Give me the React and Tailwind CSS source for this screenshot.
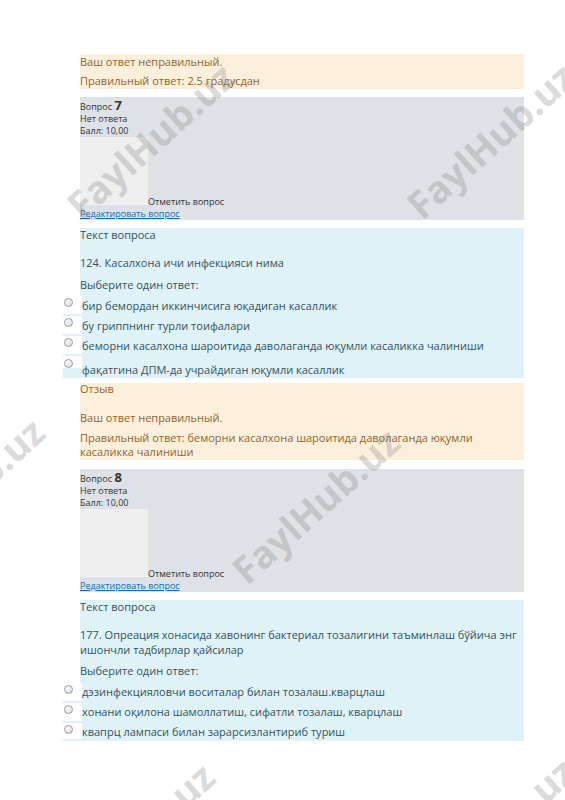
import React from 'react';

/* quiz review page: feedback, info and question blocks */

const Radio = () => (
  <span className="block w-[9px] h-[9px] rounded-full border border-[#9a9a9a] bg-linear-to-br from-white to-[#dcdcdc]" />
);

const Watermark = ({ className }) => (
  <span
    className={`absolute z-10 pointer-events-none select-none whitespace-nowrap text-[38px] font-bold leading-none text-[#808080]/30 -translate-x-1/2 -translate-y-1/2 -rotate-[42deg] ${className}`}
  >
    FaylHub.uz
  </span>
);

const InfoBox = ({ num, className = '' }) => (
  <div className={`bg-[#dee2e6] text-[9px] text-[#333] h-[123px] ${className}`}>
    <div className="h-[16px] pt-[2px] leading-[12px]">
      Вопрос <span className="text-[13px] font-bold leading-[12px]">{num}</span>
    </div>
    <div className="leading-[12px]">Нет ответа</div>
    <div className="leading-[12px]">Балл: 10,00</div>
    <div className="leading-[12px]">
      <span className="inline-block w-[68px] h-[68px] bg-[#efefef] align-baseline" />
      Отметить вопрос
    </div>
    <div className="leading-[12px]">
      <a href="#" className="text-[#0f6cbf] underline">Редактировать вопрос</a>
    </div>
  </div>
);

const Option = ({ text, rowH, cellH, cellPt, textPt }) => (
  <div className={`flex ${rowH}`}>
    <div className={`w-[19px] shrink-0 bg-white pl-[1px] ${cellH} ${cellPt}`}>
      <Radio />
    </div>
    <span className={`whitespace-nowrap ${textPt}`}>{text}</span>
  </div>
);

export default function App() {
  return (
    <div className="relative w-[565px] h-[800px] overflow-hidden bg-white font-['Open_Sans',sans-serif]">
      <div className="ml-[80px] w-[444px] pt-[54px] flex flex-col">
        {/* feedback of question 6 */}
        <div className="bg-[#fcefdc] text-[#8e662e] text-[11px]">
          <p className="leading-[16px]">Ваш ответ неправильный.</p>
          <p className="leading-[16px] mt-[3px]">Правильный ответ: 2.5 градусдан</p>
        </div>

        <InfoBox num="7" className="mt-[8px]" />

        <div className="mt-[8px] bg-[#def2f8] text-[#34525c] text-[11px] leading-[14px]">
          <p>Текст вопроса</p>
          <p className="mt-[14px]">124. Касалхона ичи инфекцияси нима</p>
          <p className="mt-[8px]">Выберите один ответ:</p>
          <div className="mt-[4px] -ml-[17px] bg-[#def2f8]">
            <Option text="бир бемордан иккинчисига юқадиган касаллик" rowH="h-[20px]" cellH="h-[18px]" cellPt="pt-[2px]" textPt="pt-[3px]" />
            <Option text="бу гриппнинг турли тоифалари" rowH="h-[20px]" cellH="h-[18px]" cellPt="pt-[2px]" textPt="pt-[3px]" />
            <Option text="беморни касалхона шароитида даволаганда юқумли касаликка чалиниши" rowH="h-[20px]" cellH="h-[18px]" cellPt="pt-[2px]" textPt="pt-[3px]" />
            <Option text="фақатгина ДПМ-да учрайдиган юқумли касаллик" rowH="h-[22px]" cellH="h-[12px]" cellPt="pt-[3px]" textPt="pt-[7px]" />
          </div>
        </div>

        <div className="mt-[5px] bg-[#fcefdc] text-[#8e662e] text-[11px] pb-[1px]">
          <p className="leading-[12px]">Отзыв</p>
          <p className="leading-[14px] mt-[16px]">Ваш ответ неправильный.</p>
          <p className="leading-[14px] mt-[6px] whitespace-nowrap">
            Правильный ответ: беморни касалхона шароитида даволаганда юқумли
            <br />
            касаликка чалиниши
          </p>
        </div>

        <InfoBox num="8" className="mt-[9px]" />

        <div className="mt-[8px] bg-[#def2f8] text-[#34525c] text-[11px] leading-[14px]">
          <p>Текст вопроса</p>
          <p className="mt-[13px] leading-[15px] whitespace-nowrap">
            177. Опреация хонасида хавонинг бактериал тозалигини таъминлаш  бўйича энг
            <br />
            ишончли тадбирлар қайсилар
          </p>
          <p className="mt-[7px]">Выберите один ответ:</p>
          <div className="mt-[5px] -ml-[17px] bg-[#def2f8]">
            <Option text="дэзинфекцияловчи воситалар билан тозалаш.кварцлаш" rowH="h-[20px]" cellH="h-[18px]" cellPt="pt-[2px]" textPt="pt-[2px]" />
            <Option text="хонани оқилона шамоллатиш, сифатли тозалаш, кварцлаш" rowH="h-[20px]" cellH="h-[18px]" cellPt="pt-[2px]" textPt="pt-[2px]" />
            <Option text="квапрц лампаси билан зарарсизлантириб туриш" rowH="h-[18px]" cellH="h-[16px]" cellPt="pt-[2px]" textPt="pt-[2px]" />
          </div>
        </div>
      </div>

      <Watermark className="left-[150px] top-[140px]" />
      <Watermark className="left-[490px] top-[140px]" />
      <Watermark className="left-[315px] top-[505px]" />
      <Watermark className="left-[-40px] top-[495px]" />
      <Watermark className="left-[130px] top-[840px]" />
      <Watermark className="left-[490px] top-[835px]" />
    </div>
  );
}
